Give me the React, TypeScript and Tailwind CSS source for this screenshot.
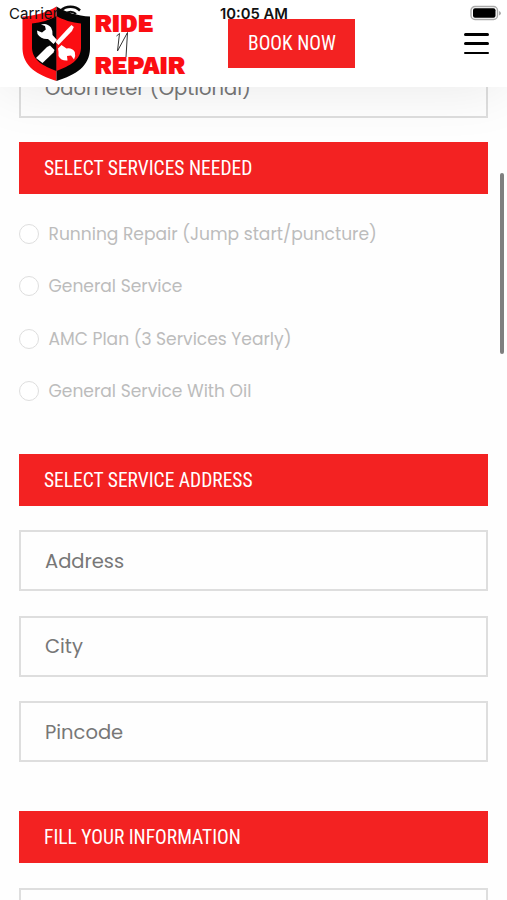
import React from "react";

const condensed =
  "font-['Roboto_Condensed','Roboto',sans-serif] whitespace-nowrap";
const geometric =
  "font-['Poppins','Inter',sans-serif] whitespace-nowrap";
const wordmark =
  "absolute left-[72.500px] font-['Work_Sans','Inter',sans-serif] text-[24.600px] font-black leading-[22px] text-[#fb0d12]";

function Logo() {
  return (
    <div className="relative ml-[22px] h-[87px] w-[168px] shrink-0">
      <svg className="absolute left-0 top-0" width="70" height="87" viewBox="22 0 70 87" aria-hidden="true">
        <path d="M56.500 6.500C48 12 35 16 22.500 16.500V49C23 66 37 75 56.500 81Z" fill="#fb0d12" />
        <path d="M56.500 6.500C65 12 78 16 90 16.500V49C89.500 66 76 75 56.500 81Z" fill="#050505" />
        <path d="M56.500 16C50 20 41 22.500 32 23.500V48C32.500 60 43 66 56.500 71Z" fill="#050505" />
        <path d="M56.500 16C63 20 72 22.500 81 23.500V48C80.500 60 70 66 56.500 71Z" fill="#fb0d12" />
        <g fill="#fff">
          <path d="M41 24.500Q47 22.500 51 27.500Q53 31 52.500 35L57 40L53.500 44L48 39Q41 39.500 37.500 34L37 30.500L42 32.500L45.800 29.500L45 26Z" />
          <path d="M58 48.500L61.500 45L66.500 48.500Q72 47.500 74.800 52Q76 56 74 59.500L71 55.500L67 56L67.500 60.500Q61 61 58.500 56L58.500 52Z" />
          <path d="M71.500 25L73.800 27L72 31L58.500 45L55.500 42L67.500 29Z" />
          <path d="M50 45.500L54.500 50L53.500 52.500L42.500 63L36 58L47 47Z" />
        </g>
      </svg>
      <span className={wordmark + " top-[13px]"}>RIDE</span>
      <svg className="absolute left-[94px] top-[31px]" width="16" height="27" viewBox="0 0 16 27" fill="none" stroke="#333" strokeWidth="1" aria-hidden="true">
        <path d="M.5 5L3.500 2.500L1.500 20L11.500 1.500L10 26" />
      </svg>
      <span className={wordmark + " top-[55px]"}>REPAIR</span>
    </div>
  );
}

function StatusBar() {
  return (
    <div className="absolute inset-x-0 top-0 h-7 font-['Inter',sans-serif] text-[15px] leading-7 text-[#111]">
      <span className="absolute left-[9px] top-0">Carrier</span>
      <svg className="absolute left-[60px] top-[5px]" width="22" height="12" viewBox="0 0 22 12" fill="none" stroke="#080808" aria-hidden="true">
        <path d="M1 5.500C6 .500 15 .500 20 5.500" strokeWidth="2.500" />
        <path d="M5 9C8 6 13 6 16 9" strokeWidth="2.200" />
      </svg>
      <span className="absolute left-[220px] top-0 text-[14.800px] font-semibold">10:05 AM</span>
      <svg className="absolute left-[470px] top-[5px]" width="32" height="16" viewBox="0 0 32 16" aria-hidden="true">
        <rect x="1" y="1.500" width="26.500" height="13" rx="4" fill="#fff" stroke="#aaa" strokeWidth="1.400" />
        <rect x="3" y="3.300" width="22.500" height="9.400" rx="2" fill="#000" />
        <path d="M29 6V10.500Q31 9.500 31 8.200Q31 7 29 6Z" fill="#aaa" />
      </svg>
    </div>
  );
}

function SectionTitle({ children }: { children: React.ReactNode }) {
  return (
    <h2 className="flex h-[52px] items-center bg-[#f32222] pl-[25px] pt-[2px] text-[19.500px] text-white">
      <span className={condensed}>{children}</span>
    </h2>
  );
}

function Field({ label }: { label: string }) {
  return (
    <div className="flex h-[61px] items-center border-2 border-[#dedede] pl-6 pt-[2px] text-[19.500px] text-[#777]">
      <span className={geometric}>{label}</span>
    </div>
  );
}

const services = [
  "Running Repair (Jump start/puncture)",
  "General Service",
  "AMC Plan (3 Services Yearly)",
  "General Service With Oil",
];

export default function App() {
  return (
    <div className="relative h-[900px] w-[507px] overflow-hidden bg-[#fefefe]">
      <header className="absolute inset-x-0 top-0 z-10 flex h-[87px] bg-white shadow-[0_0_60px_rgba(0,0,0,0.09)]">
        <Logo />
        <button className="ml-[38px] mt-[19px] flex h-[49px] w-[127px] items-center bg-[#f32222] pl-5 text-[19.500px] text-white">
          <span className={condensed}>BOOK NOW</span>
        </button>
        <div className="ml-auto mr-[18px] mt-[33px] flex h-[21px] w-[25px] flex-col justify-between">
          <i className="h-[2.500px] rounded bg-black" />
          <i className="h-[2.500px] rounded bg-black" />
          <i className="h-[2.500px] rounded bg-black" />
        </div>
        <StatusBar />
      </header>
      <main className="flex flex-col px-[19px] pt-[57px]">
        <Field label="Odometer (Optional)" />
        <div className="mt-6">
          <SectionTitle>SELECT SERVICES NEEDED</SectionTitle>
        </div>
        <ul className="mt-[13.500px] flex flex-col">
          {services.map((s) => (
            <li key={s} className="flex h-[52.500px] items-center gap-[9.500px] text-[17.100px] text-[#bcbcbc]">
              <i className="h-5 w-5 shrink-0 rounded-full border border-[#dedede] bg-white" />
              <span className={geometric + " pt-[2px]"}>{s}</span>
            </li>
          ))}
        </ul>
        <div className="mt-[36px]">
          <SectionTitle>SELECT SERVICE ADDRESS</SectionTitle>
        </div>
        <div className="mt-[24.500px] flex flex-col gap-[24.500px]">
          <Field label="Address" />
          <Field label="City" />
          <Field label="Pincode" />
        </div>
        <div className="mt-[49px]">
          <SectionTitle>FILL YOUR INFORMATION</SectionTitle>
        </div>
        <div className="mt-[25px] h-[61px] border-2 border-[#dedede]" />
      </main>
      <div className="absolute left-[500px] top-[173px] h-[181px] w-[3.500px] rounded-full bg-[#7f7f7f]" />
    </div>
  );
}
